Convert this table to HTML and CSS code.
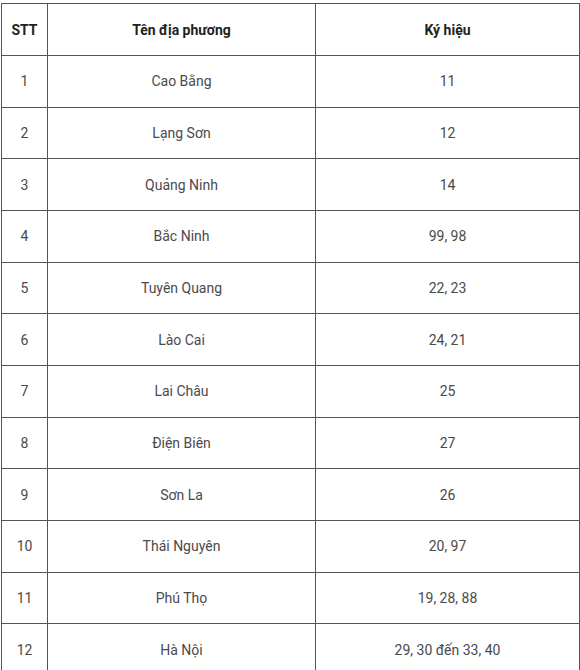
FILE: index.html
```html
<!DOCTYPE html>
<html lang="vi">
<head>
<meta charset="utf-8">
<link rel="stylesheet" href="styles.css">
</head>
<body>
<table class="codes">
  <colgroup>
    <col class="c-stt">
    <col class="c-name">
    <col class="c-code">
  </colgroup>
  <thead>
    <tr class="head"><th>STT</th><th>Tên địa phương</th><th>Ký hiệu</th></tr>
  </thead>
  <tbody>
    <tr><td>1</td><td>Cao Bằng</td><td>11</td></tr>
    <tr><td>2</td><td>Lạng Sơn</td><td>12</td></tr>
    <tr><td>3</td><td>Quảng Ninh</td><td>14</td></tr>
    <tr><td>4</td><td>Bắc Ninh</td><td>99, 98</td></tr>
    <tr><td>5</td><td>Tuyên Quang</td><td>22, 23</td></tr>
    <tr><td>6</td><td>Lào Cai</td><td>24, 21</td></tr>
    <tr><td>7</td><td>Lai Châu</td><td>25</td></tr>
    <tr><td>8</td><td>Điện Biên</td><td>27</td></tr>
    <tr><td>9</td><td>Sơn La</td><td>26</td></tr>
    <tr><td>10</td><td>Thái Nguyên</td><td>20, 97</td></tr>
    <tr><td>11</td><td>Phú Thọ</td><td>19, 28, 88</td></tr>
    <tr><td>12</td><td>Hà Nội</td><td>29, 30 đến 33, 40</td></tr>
  </tbody>
</table>
</body>
</html>
```

FILE: styles.css
```css
html, body {
  margin: 0;
  padding: 0;
  background: #fff;
}
body {
  padding: 3px 0 0 1px;
  font-family: Roboto, "Noto Sans", sans-serif;
  font-size: 14px;
  color: #4a4a4a;
}
.codes {
  border-collapse: collapse;
  width: 578px;
  table-layout: fixed;
}
.c-stt { width: 46px; }
.c-name { width: 268px; }
.c-code { width: 264px; }
.codes th,
.codes td {
  border: 1px solid #555;
  text-align: center;
  vertical-align: middle;
  padding: 0;
  height: 50.67px;
}
.codes th {
  font-weight: 700;
  color: #222;
  height: 51px;
}
```
